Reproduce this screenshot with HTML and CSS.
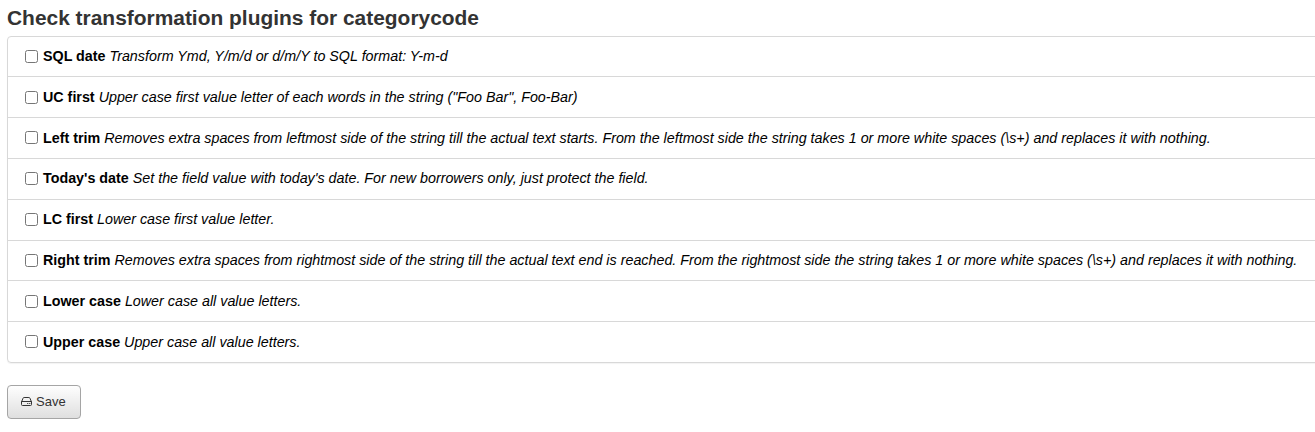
FILE: index.html
```html
<!DOCTYPE html>
<html lang="en">
<head>
<meta charset="utf-8">
<title>Transformation plugins</title>
<link rel="stylesheet" href="styles.css">
</head>
<body>
<form class="page">
  <h3 class="title">Check transformation plugins for categorycode</h3>
  <ul class="plugins">
    <li class="plugin"><label class="choice"><input class="check" type="checkbox"><span><b>SQL date</b> <i>Transform Ymd, Y/m/d or d/m/Y to SQL format: Y-m-d</i></span></label></li>
    <li class="plugin"><label class="choice"><input class="check" type="checkbox"><span><b>UC first</b> <i>Upper case first value letter of each words in the string ("Foo Bar", Foo-Bar)</i></span></label></li>
    <li class="plugin"><label class="choice"><input class="check" type="checkbox"><span><b>Left trim</b> <i>Removes extra spaces from leftmost side of the string till the actual text starts. From the leftmost side the string takes 1 or more white spaces (\s+) and replaces it with nothing.</i></span></label></li>
    <li class="plugin"><label class="choice"><input class="check" type="checkbox"><span><b>Today's date</b> <i>Set the field value with today's date. For new borrowers only, just protect the field.</i></span></label></li>
    <li class="plugin"><label class="choice"><input class="check" type="checkbox"><span><b>LC first</b> <i>Lower case first value letter.</i></span></label></li>
    <li class="plugin"><label class="choice"><input class="check" type="checkbox"><span><b>Right trim</b> <i>Removes extra spaces from rightmost side of the string till the actual text end is reached. From the rightmost side the string takes 1 or more white spaces (\s+) and replaces it with nothing.</i></span></label></li>
    <li class="plugin"><label class="choice"><input class="check" type="checkbox"><span><b>Lower case</b> <i>Lower case all value letters.</i></span></label></li>
    <li class="plugin"><label class="choice"><input class="check" type="checkbox"><span><b>Upper case</b> <i>Upper case all value letters.</i></span></label></li>
  </ul>
  <button class="save" type="button">
    <svg class="disk" viewBox="0 0 11 9" aria-hidden="true"><g fill="none" stroke="currentColor" stroke-width="1"><path d="M.5 5 2 1.300Q2.300.5 3.100.5h4.800q.8 0 1.100.8L10.500 5v2.500q0 1-1 1h-8q-1 0-1-1V5q0-.5.5-.5h9q.5 0 .5.5"/></g><path fill="currentColor" d="M6.200 6h1.100v1H6.200zM8.200 6h1.100v1H8.200z"/></svg>
    <span>Save</span>
  </button>
</form>
</body>
</html>
```
FILE: styles.css
```css
body {
  margin: 0;
  background: #fff;
  color: #000;
  font-family: "Liberation Sans", Arial, sans-serif;
  overflow: hidden;
}

.page {
  display: flex;
  flex-direction: column;
  align-items: flex-start;
  padding: 4px 0 0 7px;
}

.title {
  margin: 0 0 3.6px;
  color: #333;
  font-size: 20.93px;
  line-height: 28px;
}

.plugins {
  box-sizing: border-box;
  width: 1340px;
  margin: 0 0 22.4px;
  padding: 0;
  list-style: none;
  border: 1px solid #d8d8d8;
  border-radius: 4px;
  box-shadow: 0 1px 1px rgba(0, 0, 0, 0.05);
}

.plugin {
  box-sizing: border-box;
  height: 40.8px;
  padding-left: 17px;
  border-bottom: 1px solid #d8d8d8;
}

.plugin:last-child {
  border-bottom: 0;
  height: 39.8px;
}

.choice {
  display: flex;
  align-items: center;
  height: 38.9px;
  gap: 5px;
  font-size: 14.3px;
  white-space: nowrap;
}

.check {
  flex: none;
  width: 13px;
  height: 13px;
  margin: 0.6px 0 0;
}

.save {
  box-sizing: border-box;
  display: flex;
  align-items: center;
  gap: 4px;
  width: 74px;
  height: 34px;
  padding: 0 0 1px 13px;
  color: #333;
  font-family: inherit;
  font-size: 13px;
  background: linear-gradient(#fefefe, #dfdfdf);
  border: 1px solid #a5a5a5;
  border-radius: 4px;
}

.disk {
  width: 11px;
  height: 9px;
}
```
